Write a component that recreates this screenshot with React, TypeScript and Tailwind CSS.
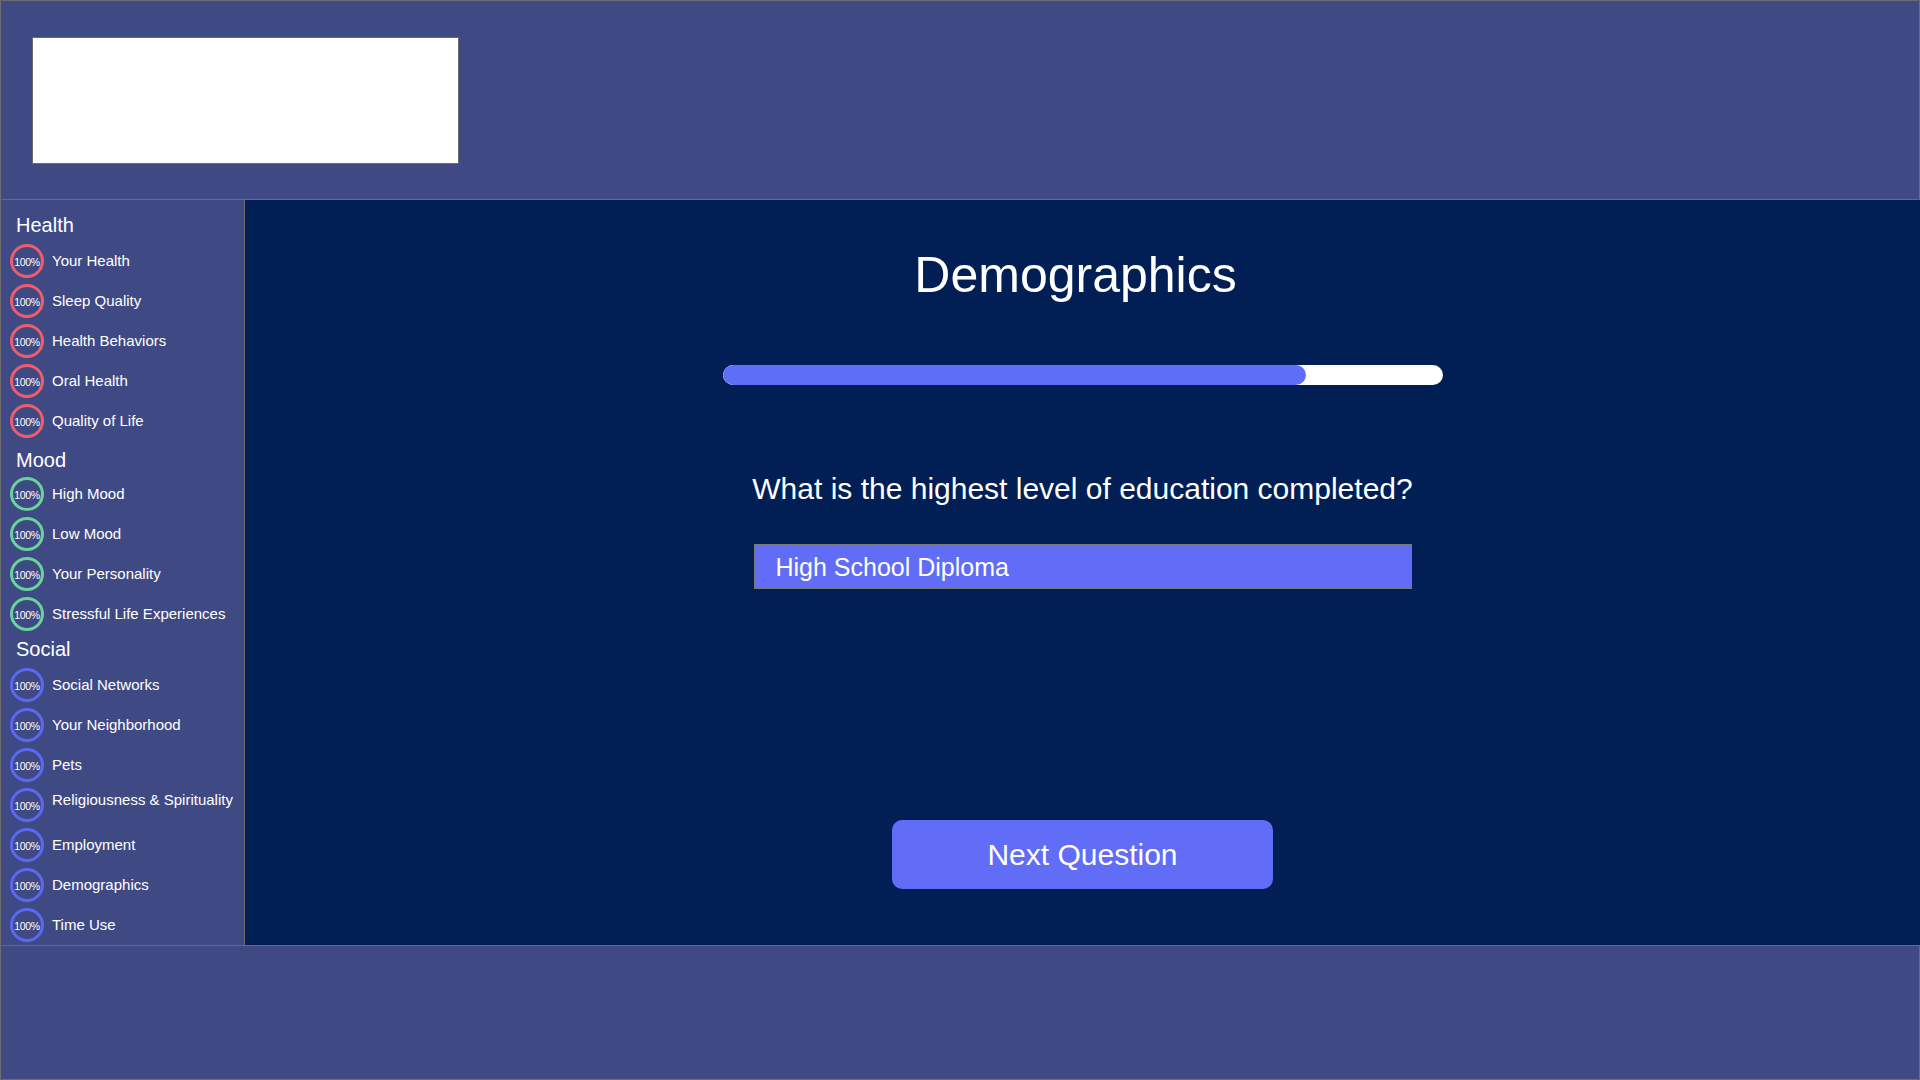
import React from 'react';

type Section = {
  title: string;
  color: string;
  items: string[];
};

const sections: Section[] = [
  {
    title: 'Health',
    color: 'border-[#ef5d6b]',
    items: ['Your Health', 'Sleep Quality', 'Health Behaviors', 'Oral Health', 'Quality of Life'],
  },
  {
    title: 'Mood',
    color: 'border-[#69d39c]',
    items: ['High Mood', 'Low Mood', 'Your Personality', 'Stressful Life Experiences'],
  },
  {
    title: 'Social',
    color: 'border-[#5b68f4]',
    items: [
      'Social Networks',
      'Your Neighborhood',
      'Pets',
      'Religiousness & Spirituality',
      'Employment',
      'Demographics',
      'Time Use',
    ],
  },
];

function ProgressRing({ color }: { color: string }) {
  return (
    <div
      className={`w-[34px] h-[34px] shrink-0 rounded-full border-[3px] ${color} flex items-center justify-center pt-[2px] text-[10.5px] leading-none tracking-[-0.3px] text-white`}
    >
      100%
    </div>
  );
}

function Sidebar() {
  return (
    <aside className="w-[245px] shrink-0 bg-[#3f4a84] border-x border-[#6b6b6b] pt-[10px] pl-[9px]">
      {sections.map((section, i) => (
        <div key={section.title} className={i === 1 ? 'mt-[2px]' : ''}>
          <div
            className={`h-[31px] pl-[6px] text-[20px] leading-[24px] text-white ${
              i === 1 ? 'pt-[5px]' : 'pt-[3px]'
            }`}
          >
            {section.title}
          </div>
          {section.items.map((item) => (
            <div key={item} className="h-[40px] flex items-center">
              <ProgressRing color={section.color} />
              <span
                className={`ml-[8px] text-[15px] leading-[18px] text-white ${
                  item === 'Religiousness & Spirituality' ? '-mt-[10px]' : ''
                }`}
              >
                {item}
              </span>
            </div>
          ))}
        </div>
      ))}
    </aside>
  );
}

function Question() {
  const progress = 81;

  return (
    <main className="flex-1 bg-[#011f54] flex flex-col items-center">
      <h1 className="mt-[50px] pr-[14px] text-[50px] leading-none font-normal text-white">
        Demographics
      </h1>

      <div className="mt-[65px] w-[720px] h-[20px] rounded-full bg-white overflow-hidden">
        <div className="h-full rounded-full bg-[#5f6ef6]" style={{ width: `${progress}%` }} />
      </div>

      <p className="mt-[89px] text-[30px] leading-none text-white">
        What is the highest level of education completed?
      </p>

      <div className="mt-[40px] w-[658px] h-[45px] border border-[#777777] bg-[#616cf7] flex items-center pl-[21px] pt-[2px] text-[25px] text-white">
        High School Diploma
      </div>

      <button className="mt-[231px] w-[381px] h-[69px] rounded-[10px] bg-[#616cf7] text-[30px] text-white">
        Next Question
      </button>
    </main>
  );
}

export default function App() {
  return (
    <div className="w-[1920px] h-[1080px] flex flex-col font-['Liberation_Sans',Arial,sans-serif] bg-[#3f4a84]">
      <header className="h-[200px] shrink-0 border border-[#6b6b6b] bg-[#3f4a84] pl-[31px] pt-[36px]">
        <div className="w-[427px] h-[127px] bg-white border border-[#6b6b6b]" />
      </header>

      <div className="h-[745px] shrink-0 flex">
        <Sidebar />
        <Question />
      </div>

      <footer className="flex-1 border border-[#6b6b6b] bg-[#3f4a84]" />
    </div>
  );
}
